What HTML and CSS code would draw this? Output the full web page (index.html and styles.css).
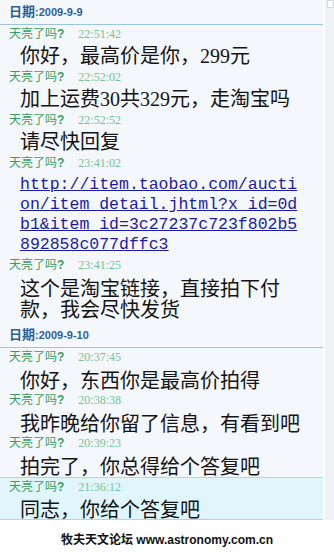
FILE: index.html
```html
<!DOCTYPE html>
<html lang="zh-CN">
<head>
<meta charset="utf-8">
<title>聊天记录</title>
<link rel="stylesheet" href="styles.css">
</head>
<body>
<div class="frame">
  <div class="main">
    <section class="day">
      <div class="date"><span class="date-label">日期</span><span class="date-value">:2009-9-9</span></div>
      <div class="msg">
        <div class="meta"><span class="who">天亮了吗<b>?</b></span><span class="time">22:51:42</span></div>
        <div class="text">你好，最高价是你，299元</div>
      </div>
      <div class="msg">
        <div class="meta"><span class="who">天亮了吗<b>?</b></span><span class="time">22:52:02</span></div>
        <div class="text">加上运费30共329元，走淘宝吗</div>
      </div>
      <div class="msg">
        <div class="meta"><span class="who">天亮了吗<b>?</b></span><span class="time">22:52:52</span></div>
        <div class="text">请尽快回复</div>
      </div>
      <div class="msg">
        <div class="meta"><span class="who">天亮了吗<b>?</b></span><span class="time">23:41:02</span></div>
        <div class="text url"><a href="#">http://item.taobao.com/auction/item_detail.jhtml?x_id=0db1&amp;item_id=3c27237c723f802b5892858c077dffc3</a></div>
      </div>
      <div class="msg">
        <div class="meta"><span class="who">天亮了吗<b>?</b></span><span class="time">23:41:25</span></div>
        <div class="text cjk">这个是淘宝链接，直接拍下付款，我会尽快发货</div>
      </div>
    </section>
    <section class="day day-next">
      <div class="date"><span class="date-label">日期</span><span class="date-value">:2009-9-10</span></div>
      <div class="msg">
        <div class="meta"><span class="who">天亮了吗<b>?</b></span><span class="time">20:37:45</span></div>
        <div class="text cjk">你好，东西你是最高价拍得</div>
      </div>
      <div class="msg">
        <div class="meta"><span class="who">天亮了吗<b>?</b></span><span class="time">20:38:38</span></div>
        <div class="text cjk">我昨晚给你留了信息，有看到吧</div>
      </div>
      <div class="msg">
        <div class="meta"><span class="who">天亮了吗<b>?</b></span><span class="time">20:39:23</span></div>
        <div class="text cjk">拍完了，你总得给个答复吧</div>
      </div>
      <div class="msg msg-hl">
        <div class="meta"><span class="who">天亮了吗<b>?</b></span><span class="time">21:36:12</span></div>
        <div class="text cjk">同志，你给个答复吧</div>
      </div>
    </section>
  </div>
  <div class="scroll"><div class="scroll-btn"></div></div>
</div>
<footer class="footer">牧夫天文论坛 www.astronomy.com.cn</footer>
</body>
</html>
```
FILE: styles.css
```css
html, body {
  margin: 0;
  padding: 0;
  background: #ffffff;
}

body {
  width: 334px;
  height: 552px;
  overflow: hidden;
  font-family: "Liberation Serif", "Noto Sans CJK SC", serif;
}

.frame {
  display: flex;
  background: #f4f7fb;
}

.main {
  flex: 1;
  min-width: 0;
}

.day-next {
  margin-top: 3px;
}

.date {
  height: 24px;
  line-height: 22px;
  padding-left: 9px;
  border-bottom: 1px solid #9cc6da;
  color: #2e5f95;
  font-weight: bold;
  overflow: hidden;
  white-space: nowrap;
}

.date-label {
  font-family: "Noto Sans CJK SC", sans-serif;
  font-size: 13px;
}

.date-value {
  font-family: "Liberation Sans", sans-serif;
  font-size: 11px;
}

.meta {
  height: 16px;
  line-height: 16px;
  padding-left: 9px;
  font-size: 12px;
  white-space: nowrap;
  overflow: hidden;
}

.who {
  color: #3a9e5e;
  font-family: "Noto Sans CJK SC", sans-serif;
}

.who b {
  font-family: "Liberation Sans", sans-serif;
  font-weight: bold;
}

.time {
  margin-left: 14px;
  color: #76c393;
  font-family: "Liberation Serif", serif;
}

.text {
  padding: 5px 21px 1px 20px;
  font-size: 20px;
  line-height: 21px;
  color: #141414;
  font-family: "Liberation Serif", "Noto Sans CJK SC", serif;
}

.cjk {
  font-family: "Noto Sans CJK SC", sans-serif;
}

.url {
  font-family: "Liberation Mono", monospace;
  font-size: 16.5px;
  line-height: 20px;
  word-break: break-all;
}

.url a {
  color: #1c1ca0;
  text-decoration: underline;
}

.msg-hl {
  background: #e1f5fd;
  border-top: 1px solid #aad8e8;
  border-bottom: 1px solid #aad8e8;
}

.msg-hl .text {
  padding-top: 4px;
  padding-bottom: 0;
}

.scroll {
  width: 11px;
  box-sizing: border-box;
  border-left: 2px solid #ffffff;
  background: #eef2f6;
  display: flex;
  justify-content: flex-end;
  align-items: flex-start;
}

.scroll-btn {
  width: 7px;
  height: 8px;
  box-sizing: border-box;
  border: 1px solid #d3dbe2;
  background: #f8fafc;
}

.footer {
  height: 32px;
  box-sizing: border-box;
  padding-top: 12px;
  line-height: 16px;
  text-align: center;
  font-family: "Liberation Sans", "Noto Sans CJK SC", sans-serif;
  font-size: 12px;
  font-weight: bold;
  color: #111111;
  background: #ffffff;
}
```
